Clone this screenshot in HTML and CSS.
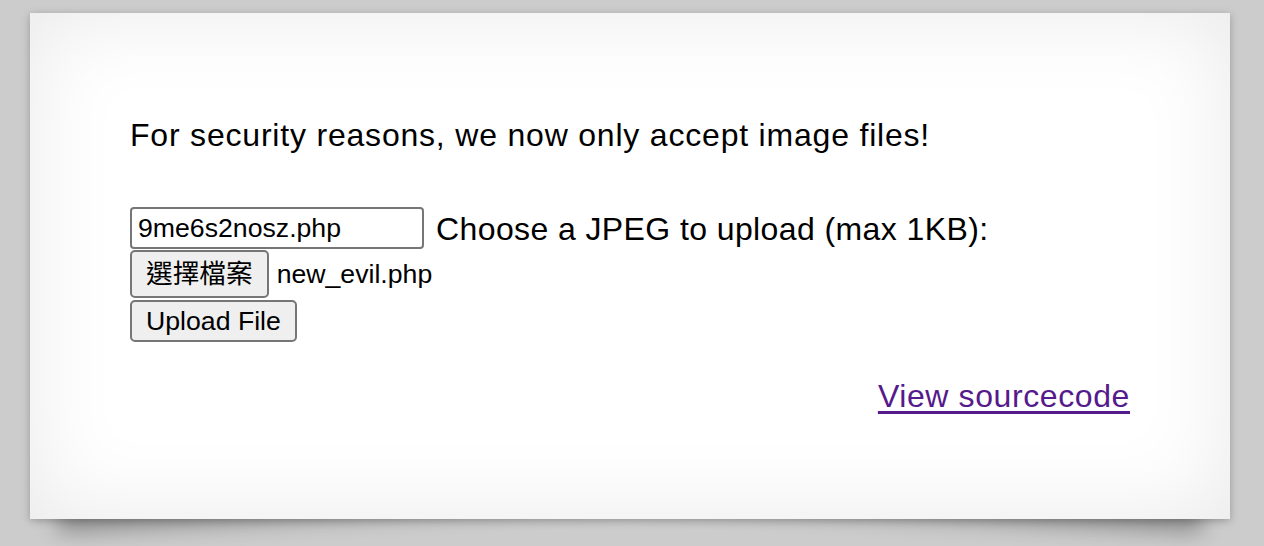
FILE: index.html
```html
<!DOCTYPE html>
<html lang="en">
<head>
<meta charset="utf-8">
<title>natas13</title>
<link rel="stylesheet" href="styles.css">
</head>
<body>
<div class="card">
  <p class="intro">For security reasons, we now only accept image files!</p>
  <form class="upload" action="index.php" method="POST">
    <div class="row row-name">
      <input class="text-input" type="text" name="filename" value="9me6s2nosz.php">
      <span class="label">Choose a JPEG to upload (max 1KB):</span>
    </div>
    <div class="row row-file">
      <button type="button" class="btn btn-file">選擇檔案</button>
      <span class="file-name">new_evil.php</span>
    </div>
    <div class="row row-submit">
      <button type="submit" class="btn btn-submit">Upload File</button>
    </div>
  </form>
  <div class="viewsource"><a class="source-link" href="index-source.html">View sourcecode</a></div>
</div>
</body>
</html>
```
FILE: styles.css
```css
html, body {
  margin: 0;
  padding: 0;
}

body {
  background: #cccccc;
  font-family: "Liberation Sans", Arial, "Noto Sans CJK TC", sans-serif;
  color: #000;
  padding: 13px 0 27px 30px;
}

.card {
  position: relative;
  width: 1000px;
  padding: 100px;
  background: #ffffff;
  box-shadow: 0 2px 8px rgba(0, 0, 0, 0.25), inset 0 0 90px rgba(0, 0, 0, 0.09);
  font-size: 32px;
  line-height: 45px;
  letter-spacing: 0.55px;
}

.card::before,
.card::after {
  content: "";
  position: absolute;
  z-index: -1;
  bottom: 30px;
  left: 24px;
  width: 48%;
  max-width: 580px;
  height: 20%;
  box-shadow: 0 28px 22px rgba(0, 0, 0, 0.32);
  transform: rotate(-3deg);
}

.card::after {
  left: auto;
  right: 24px;
  transform: rotate(3deg);
}

.intro {
  margin: 0;
  letter-spacing: 0.8px;
}

.upload {
  margin: 0;
  padding-top: 49px;
  display: flex;
  flex-direction: column;
}

.row {
  display: flex;
  align-items: center;
}

.row-name {
  height: 42px;
}

.row-file {
  margin-top: 1px;
  height: 48px;
}

.row-submit {
  margin-top: 2px;
  height: 42px;
}

.text-input {
  box-sizing: border-box;
  width: 294px;
  height: 42px;
  margin: 0;
  padding: 0 6px;
  border: 2px solid #767676;
  border-radius: 4px;
  background: #fff;
  font-family: "Liberation Sans", Arial, sans-serif;
  font-size: 26.67px;
  color: #000;
  letter-spacing: 0;
}

.label {
  margin-left: 12px;
  padding-top: 3px;
  letter-spacing: 0.4px;
}

.btn {
  box-sizing: border-box;
  margin: 0;
  padding: 0 14px;
  border: 2px solid #767676;
  border-radius: 5px;
  background: #efefef;
  color: #000;
  font-family: "Liberation Sans", Arial, "Noto Sans CJK TC", sans-serif;
  font-size: 26.67px;
  letter-spacing: 0;
  line-height: 1;
}

.btn-file {
  height: 48px;
}

.btn-submit {
  height: 42px;
}

.file-name {
  margin-left: 8px;
  font-size: 26.67px;
  letter-spacing: 0;
}

.viewsource {
  margin-top: 32px;
  text-align: right;
}

.source-link {
  color: #551a8b;
  letter-spacing: 0.6px;
  text-decoration: underline;
  text-underline-offset: 4px;
  text-decoration-thickness: 3px;
}
```
